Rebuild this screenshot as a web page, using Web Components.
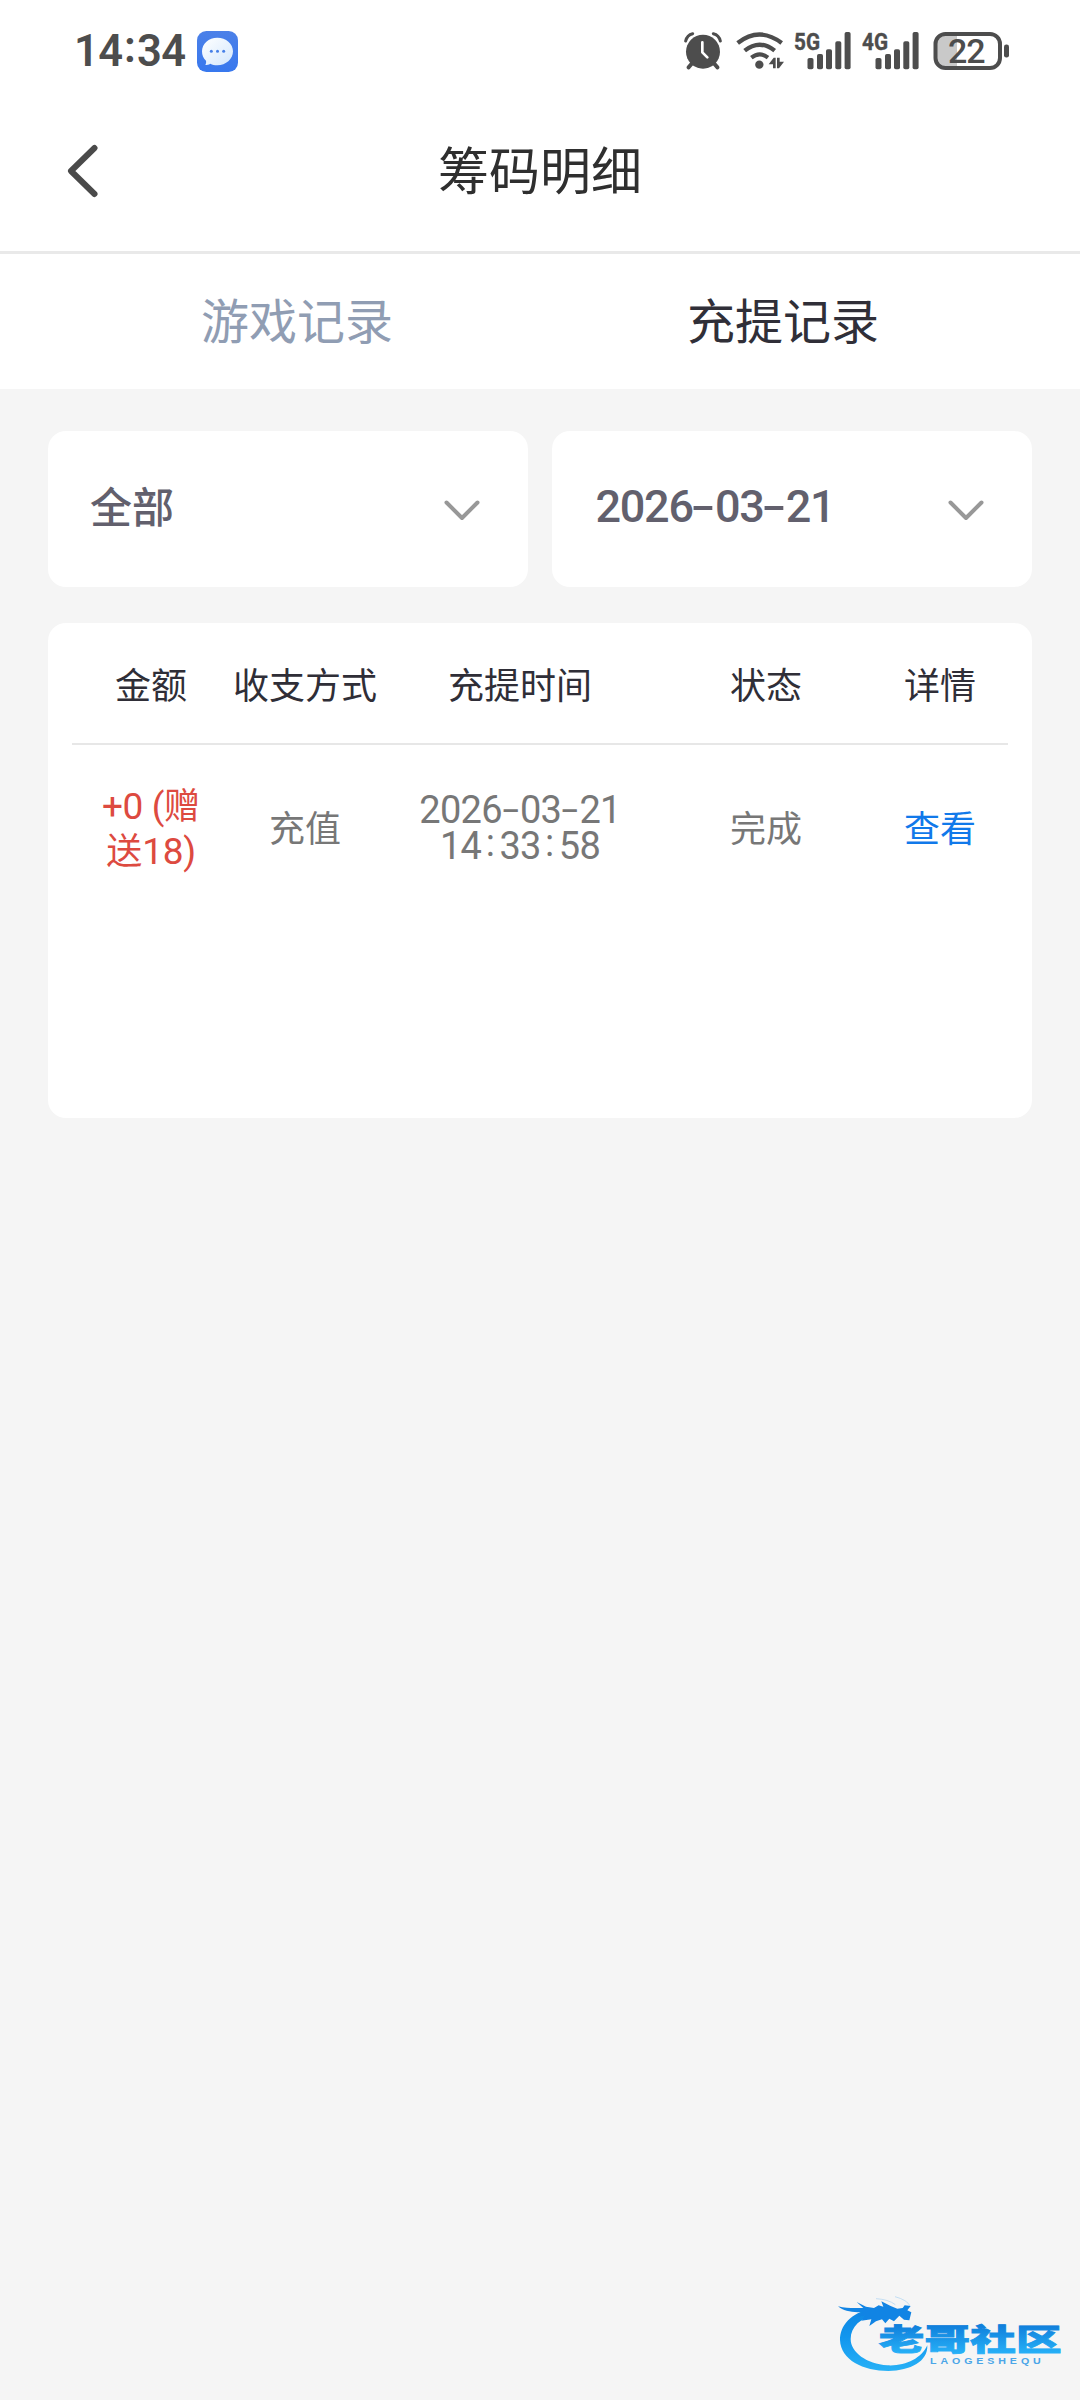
<!DOCTYPE html>
<html lang="zh-CN">
<head>
<meta charset="utf-8">
<title>筹码明细</title>
<style>
  html, body { margin: 0; padding: 0; background: #f5f5f5; }
  body { font-family: Roboto, "Noto Sans CJK SC", sans-serif; }
</style>
</head>
<body>
<chip-page>
  <status-bar slot="top" time="14:34" battery="22"></status-bar>
  <nav-header slot="top">筹码明细</nav-header>
  <tab-strip slot="top">
    <tab-item>游戏记录</tab-item>
    <tab-item active>充提记录</tab-item>
  </tab-strip>
  <filter-row>
    <filter-select>全部</filter-select>
    <filter-select><num-text value="2026-03-21" size="45" pitch="24" gap="22.2" dash="17" style="padding:3px 0 0 1.5px"></num-text></filter-select>
  </filter-row>
  <record-table></record-table>
  <community-logo slot="bottom"></community-logo>
</chip-page>

<script>
function define(name, render) {
  customElements.define(name, class extends HTMLElement {
    connectedCallback() {
      if (this.shadowRoot) return;
      this.attachShadow({ mode: 'open' }).innerHTML = render(this);
    }
  });
}

define('chip-page', () => `
  <style>
    :host { display: flex; flex-direction: column; height: 2400px; background: #f5f5f5; overflow: hidden; }
    .top { display: flex; flex-direction: column; background: #fff; }
    main { flex: 1; display: flex; flex-direction: column; gap: 36px; padding: 42px 48px 0; }
    footer { display: flex; justify-content: flex-end; padding: 0 10px 10px 0; }
  </style>
  <div class="top"><slot name="top"></slot></div>
  <main><slot></slot></main>
  <footer><slot name="bottom"></slot></footer>`);

/* Digits on a fixed pitch; dashes and colons get a wider, centred cell. */
define('num-text', el => {
  const size = +el.getAttribute('size'), pitch = +el.getAttribute('pitch');
  const gap = +el.getAttribute('gap'), dash = +el.getAttribute('dash') || 14;
  const body = el.getAttribute('value').replace(/[-:]/g, c =>
    c === '-' ? '<span class="cell"><span class="dash">-</span></span>' : '<span class="cell"><span class="colon">:</span></span>');
  const stretch = dash / (size * 0.235);
  return `<style>
    :host { display: inline-block; font-family: Roboto, sans-serif; font-size: ${size}px; line-height: 1; white-space: nowrap; letter-spacing: ${(pitch - size * 0.5615).toFixed(2)}px; }
    .cell { display: inline-block; width: ${gap}px; text-align: center; letter-spacing: 0; }
    .dash { display: inline-block; transform: translate(-0.5px, ${(-size * 0.015).toFixed(2)}px) scale(${stretch.toFixed(2)}, .95); }
    .colon { display: inline-block; transform: translateY(${(-size * 0.085).toFixed(2)}px); }
  </style>${body}`;
});

define('signal-bars', el => `
  <style>:host { display: block; } svg { display: block; margin: -8px 0; }
  text { font: 700 24px Roboto, sans-serif; stroke: #4d4d4d; stroke-width: .4px; }</style>
  <svg width="57" height="54" viewBox="0 -8 57 54" fill="#4d4d4d">
    <text x="0" y="18.200" textLength="26" lengthAdjust="spacingAndGlyphs">${el.getAttribute('net')}</text>
    <rect x="13.5" y="26" width="6" height="11.3" rx="1.8"/>
    <rect x="23" y="22" width="6" height="15.3" rx="1.8"/>
    <rect x="32" y="17.3" width="6" height="20" rx="1.8"/>
    <rect x="41.3" y="9.2" width="6" height="28.1" rx="1.8"/>
    <rect x="50.6" y="0" width="6" height="37.3" rx="1.8"/>
  </svg>`);

define('status-bar', el => `
  <style>
    :host { display: flex; align-items: center; justify-content: space-between; box-sizing: border-box; height: 102px; padding: 0 70px 0 74px; color: #4d4d4d; }
    .left, .right { display: flex; align-items: center; }
    .left { gap: 11px; }
    .time { width: 112px; padding-top: 2px; font-weight: 600; }
    svg { display: block; }
    .wifi { margin-left: 14px; }
    .s1 { margin-left: 8px; }
    .s2 { margin-left: 11px; }
    .bat { margin-left: 14px; }
    .bat text { font: 500 34px Roboto, sans-serif; }
  </style>
  <div class="left">
    <div class="time"><num-text value="${el.getAttribute('time')}" size="43.5" pitch="23.9" gap="14.4"></num-text></div>
    <svg width="41" height="41" viewBox="0 0 123 123">
      <defs><linearGradient id="b" x1="0" y1="0" x2="0" y2="1"><stop offset="0" stop-color="#4b80e8"/><stop offset="1" stop-color="#3878ee"/></linearGradient>
      <linearGradient id="w" x1="0" y1="0" x2="1" y2="1"><stop offset="0" stop-color="#fff"/><stop offset="1" stop-color="#d3e7fd"/></linearGradient></defs>
      <rect width="123" height="123" rx="28" fill="url(#b)"/>
      <path d="M61 20C87 20 108 38 108 61S87 103 61 103C53 103 46 101 40 98C35 101 30 102 25 102C27 98 28 94 27 89C19 82 15 72 15 61C15 38 35 20 61 20Z" fill="url(#w)"/>
      <g fill="#4780e8"><circle cx="43" cy="61" r="4.5"/><circle cx="61.500" cy="61" r="4.5"/><circle cx="80" cy="61" r="4.5"/></g>
    </svg>
  </div>
  <div class="right">
    <svg width="38" height="38" viewBox="0 0 114 114">
      <g stroke="#4d4d4d" fill="none" stroke-linecap="round">
        <path d="M5 27Q9 9 26 5M88 5Q105 9 109 27" stroke-width="9"/>
        <path d="M23 95L14 106M91 95L100 106" stroke-width="12"/>
      </g>
      <circle cx="57" cy="59" r="51" fill="#4d4d4d"/>
      <path d="M55 31V61L70 76" fill="none" stroke="#fff" stroke-width="8" stroke-linecap="round" stroke-linejoin="round"/>
    </svg>
    <svg class="wifi" width="50" height="38" viewBox="0 0 150 114">
      <g fill="none" stroke="#4d4d4d" stroke-linecap="butt">
        <path d="M5 33Q70-18 137 33" stroke-width="13"/>
        <path d="M26 56Q71 20 116 56" stroke-width="13"/>
        <path d="M46 77Q71 57 96 77" stroke-width="12"/>
      </g>
      <circle cx="70" cy="98" r="12.500" fill="#4d4d4d"/>
      <path d="M98 97L113 77H119V109H111V97ZM123 77H131V89H144L129 109H123Z" fill="#4d4d4d"/>
    </svg>
    <signal-bars class="s1" net="5G"></signal-bars>
    <signal-bars class="s2" net="4G"></signal-bars>
    <svg class="bat" width="77" height="38" viewBox="0 0 77 38">
      <path d="M24 2V36H12A10 10 0 0 1 2 26V12A10 10 0 0 1 12 2Z" fill="#c9c9c9"/>
      <rect x="2.500" y="2" width="64.500" height="34" rx="10" fill="none" stroke="#4d4d4d" stroke-width="4"/>
      <rect x="71" y="12.500" width="5" height="13" rx="2.300" fill="#4d4d4d"/>
      <text x="15" y="30.500" textLength="37.500" fill="#4d4d4d">${el.getAttribute('battery')}</text>
    </svg>
  </div>`);

define('nav-header', () => `
  <style>
    :host { display: grid; grid-template-columns: 1fr auto 1fr; align-items: center; box-sizing: border-box; height: 152px; padding: 0 67px 14px; border-bottom: 3px solid #e9e9e9; color: #2f2f2f; }
    h1 { margin: 0; padding-bottom: 4px; font: 400 51px/70px "Noto Sans CJK SC", sans-serif; }
    svg { display: block; margin-top: 2px; }
  </style>
  <svg width="32" height="54" viewBox="0 0 32 54" fill="none" stroke="#4a4a4a" stroke-width="6" stroke-linecap="round" stroke-linejoin="round"><path d="M27.500 4L4 27L27.500 50"/></svg>
  <h1><slot></slot></h1>`);

define('tab-strip', () => `
  <style>:host { display: flex; box-sizing: border-box; height: 135px; padding: 0 54px 7px; }</style>
  <slot></slot>`);

define('tab-item', () => `
  <style>
    :host { flex: 1; display: flex; align-items: center; justify-content: center; font: 400 48px/68px "Noto Sans CJK SC", sans-serif; color: #909db3; }
    :host([active]) { color: #302f38; }
  </style>
  <slot></slot>`);

define('filter-row', () => `
  <style>:host { display: flex; gap: 24px; }</style>
  <slot></slot>`);

define('filter-select', () => `
  <style>
    :host { flex: 1; display: flex; align-items: center; justify-content: space-between; box-sizing: border-box; height: 156px; padding: 0 46px 0 42px; background: #fff; border-radius: 18px; font: 500 42px/60px "Noto Sans CJK SC", sans-serif; color: #62606d; }
    .label { display: flex; align-items: center; padding-bottom: 9px; }
    svg { display: block; margin-top: 2px; }
  </style>
  <span class="label"><slot></slot></span>
  <svg width="40" height="24" viewBox="0 0 40 24" fill="none" stroke="#989898" stroke-width="4" stroke-linecap="round" stroke-linejoin="round"><path d="M4.500 4.500L20 20L35.500 4.500"/></svg>`);

define('record-table', () => `
  <style>
    :host { display: block; box-sizing: border-box; height: 495px; padding: 0 24px; background: #fff; border-radius: 18px; font: 400 36px/45px "Noto Sans CJK SC", sans-serif; color: #777; }
    .row { display: grid; grid-template-columns: 158px 150px 280px 212px 136px; align-items: center; justify-items: center; text-align: center; }
    .head { box-sizing: border-box; height: 122px; border-bottom: 2px solid #e7e7e7; color: #2f2e37; }
    .item { height: 162px; }
    .amount { display: flex; flex-direction: column; align-items: center; color: #dd4a40; white-space: pre; }
    .amount > span { height: 45px; }
    .n { font: 400 37px/1 Roboto, sans-serif; letter-spacing: -.4px; }
    .time { display: flex; flex-direction: column; align-items: center; padding-top: 3px; }
    .time num-text { line-height: 36px; height: 36px; }
    a { color: #1179ea; }
  </style>
  <div class="row head"><span>金额</span><span>收支方式</span><span>充提时间</span><span>状态</span><span>详情</span></div>
  <div class="row item">
    <span class="amount"><span><span class="n">+0 (</span>赠</span><span>送<span class="n">18)</span></span></span>
    <span>充值</span>
    <span class="time">
      <num-text value="2026-03-21" size="38" pitch="20.6" gap="18.2" dash="14"></num-text>
      <num-text value="14:33:58" size="38" pitch="20.6" gap="18.2"></num-text>
    </span>
    <span>完成</span>
    <a>查看</a>
  </div>`);

define('community-logo', () => `
  <style>
    :host { display: block; width: 250px; height: 110px; } svg { display: block; }
    .cn { font: 900 90px "Noto Sans CJK SC", sans-serif; }
    .en { font: 700 29px "Liberation Sans", sans-serif; }
  </style>
  <svg width="250" height="110" viewBox="0 0 750 330">
    <defs>
      <linearGradient id="g" gradientUnits="userSpaceOnUse" x1="0" y1="70" x2="0" y2="272"><stop offset="0" stop-color="#0f82df"/><stop offset=".5" stop-color="#1196ee"/><stop offset="1" stop-color="#28b1f6"/></linearGradient>
      <linearGradient id="t" x1="0" y1="0" x2="0" y2="1"><stop offset=".25" stop-color="#1080dc"/><stop offset=".9" stop-color="#27b2f8"/></linearGradient>
    </defs>
    <path fill="url(#g)" d="M160 84C90 98 60 138 60 180C62 240 130 273 205 273C272 272 324 245 322 196C304 236 255 259 202 256C140 252 92 217 92 177C92 140 122 114 168 102Z"/>
    <path fill="#1184e4" d="M110 66L138 80L162 84L176 76L190 80L184 64L212 78L232 86L248 84L254 76L272 78L262 91L274 97L268 121L252 119L238 107L222 124L208 116L196 130L186 118L168 124L148 138L154 118L124 122L136 106L110 110L128 96C96 98 72 94 54 79C82 86 108 84 130 84Z"/>
    <path fill="none" stroke="#a9d1f1" stroke-width="2" d="M168 56Q205 58 226 74M225 50Q262 60 270 78"/>
    <text class="cn" transform="translate(176 210) scale(1.52 1)" textLength="361" fill="url(#t)" stroke="url(#t)" stroke-width="2.500">老哥社区</text>
    <text class="en" transform="translate(330 251) scale(1.1 1)" textLength="302" fill="#4ba6e8">LAOGESHEQU</text>
  </svg>`);
</script>
</body>
</html>
